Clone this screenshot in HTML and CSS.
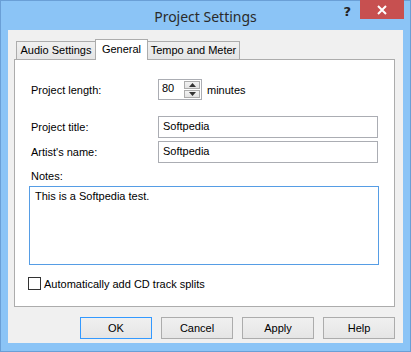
FILE: index.html
```html
<html>
<head>
<meta charset="UTF-8">
<title>Project Settings</title>
<link rel="stylesheet" href="styles.css">
</head>
<body>
<div class="window">
	<div class="titlebar">
		<div></div>
		<div class="title">Project Settings</div>
		<div class="controls">
			<span class="help">?</span>
			<span class="close">
				<svg width="10" height="10" viewBox="0 0 10 10"><path d="M1 1L9 9M9 1L1 9" stroke="#fff" stroke-width="2"/></svg>
			</span>
		</div>
	</div>
	<div class="client">
		<div class="tabs">
			<div class="tab t-audio">Audio Settings</div>
			<div class="tab t-general sel">General</div>
			<div class="tab t-tempo">Tempo and Meter</div>
		</div>
		<div class="panel">
			<div class="row-length">
				<span>Project length:</span>
				<div class="spinwrap">
					<div class="spin">
						<span class="spinval">80</span>
						<div class="spinbtns">
							<span class="sb"><svg width="7" height="4" viewBox="0 0 7 4"><path d="M3.5 0L7 4H0Z" fill="#333"/></svg></span>
							<span class="sb"><svg width="7" height="4" viewBox="0 0 7 4"><path d="M0 0H7L3.5 4Z" fill="#333"/></svg></span>
						</div>
					</div>
					<span class="unit">minutes</span>
				</div>
			</div>
			<div class="fields">
				<span>Project title:</span><div class="edit">Softpedia</div>
				<span>Artist's name:</span><div class="edit">Softpedia</div>
			</div>
			<div class="notes-lbl">Notes:</div>
			<div class="notes">This is a Softpedia test.</div>
			<div class="chkrow"><span class="chk"></span><span>Automatically add CD track splits</span></div>
		</div>
		<div class="buttons">
			<div class="btn def">OK</div>
			<div class="btn">Cancel</div>
			<div class="btn">Apply</div>
			<div class="btn">Help</div>
		</div>
	</div>
</div>
</body>
</html>
```

FILE: styles.css
```css
body {
	margin: 0;
	font-family: 'Liberation Sans', Arial, sans-serif;
	font-size: 11px;
	color: #000;
}
.window {
	width: 411px;
	height: 352px;
	box-sizing: border-box;
	background-color: #8bc4f6;
	border: 1px solid #6a9fd6;
	display: flex;
	flex-direction: column;
}
.titlebar {
	height: 29px;
	display: grid;
	grid-template-columns: 1fr auto 1fr;
}
.title {
	font-family: 'Noto Sans', sans-serif;
	font-size: 14px;
	color: #2a2a2a;
	line-height: 29px;
	padding-top: 1px;
}
.controls {
	display: flex;
	justify-content: flex-end;
	align-items: flex-start;
	padding-right: 6px;
}
.help {
	font-family: 'DejaVu Sans', sans-serif;
	font-weight: bold;
	font-size: 13px;
	color: #222;
	margin-top: 3px;
	margin-right: 9px;
}
.close {
	width: 44px;
	height: 19px;
	margin-top: -1px;
	background-color: #c75050;
	display: flex;
	align-items: center;
	justify-content: center;
}
.client {
	flex: 1;
	margin: 0 7px 8px 7px;
	background-color: #f0f0f0;
	padding: 9px 8px 0 6px;
}
.tabs {
	display: flex;
	align-items: flex-end;
	padding-left: 2px;
	height: 20px;
	position: relative;
	z-index: 2;
}
.tab {
	box-sizing: border-box;
	height: 18px;
	border: 1px solid #acacac;
	border-bottom: none;
	background: linear-gradient(#f0f0f0, #e5e5e5);
	text-align: center;
	line-height: 17px;
	margin-right: -1px;
}
.t-audio { width: 80px; }
.t-general { width: 53px; }
.t-tempo { width: 93px; }
.tab.sel {
	height: 21px;
	margin-bottom: -1px;
	background: #fff;
	line-height: 18px;
	position: relative;
	z-index: 3;
}
.panel {
	height: 248px;
	box-sizing: border-box;
	background-color: #fff;
	border: 1px solid #acacac;
	padding: 19px 16px 0 16px;
}
.row-length {
	display: grid;
	grid-template-columns: 127px 1fr;
	align-items: center;
	height: 21px;
}
.spinwrap {
	display: flex;
	align-items: center;
}
.spin {
	width: 44px;
	height: 21px;
	box-sizing: border-box;
	border: 1px solid #abadb3;
	display: flex;
	background: #fff;
}
.spinval {
	flex: 1;
	padding-left: 3px;
	line-height: 16px;
}
.spinbtns {
	width: 17px;
	display: flex;
	flex-direction: column;
	padding: 1px 1px 1px 0;
	gap: 1px;
	box-sizing: border-box;
}
.sb {
	flex: 1;
	border: 1px solid #acacac;
	background: linear-gradient(#f2f2f2, #e3e3e3);
	display: flex;
	align-items: center;
	justify-content: center;
}
.unit {
	margin-left: 5px;
}
.fields {
	display: grid;
	grid-template-columns: 127px 1fr;
	grid-auto-rows: 22px;
	row-gap: 3px;
	align-items: center;
	margin-top: 16px;
}
.edit {
	height: 22px;
	box-sizing: border-box;
	border: 1px solid #abadb3;
	padding: 2px 4px;
	line-height: 15px;
}
.notes-lbl {
	margin-top: 6px;
	line-height: 15px;
	margin-bottom: 2px;
}
.notes {
	margin-left: -2px;
	width: 350px;
	height: 79px;
	box-sizing: border-box;
	border: 1px solid #569de5;
	padding: 2px 5px;
	line-height: 15px;
}
.chkrow {
	display: flex;
	align-items: center;
	margin-top: 12px;
	margin-left: -3px;
	gap: 3px;
}
.chk {
	width: 13px;
	height: 13px;
	box-sizing: border-box;
	border: 1px solid #333;
	background: #fff;
}
.buttons {
	display: flex;
	justify-content: flex-end;
	gap: 9px;
	margin-top: 10px;
}
.btn {
	width: 72px;
	height: 22px;
	box-sizing: border-box;
	border: 1px solid #acacac;
	background: linear-gradient(#f0f0f0, #e5e5e5);
	text-align: center;
	line-height: 20px;
}
.btn.def {
	border-color: #3399ff;
}
```
